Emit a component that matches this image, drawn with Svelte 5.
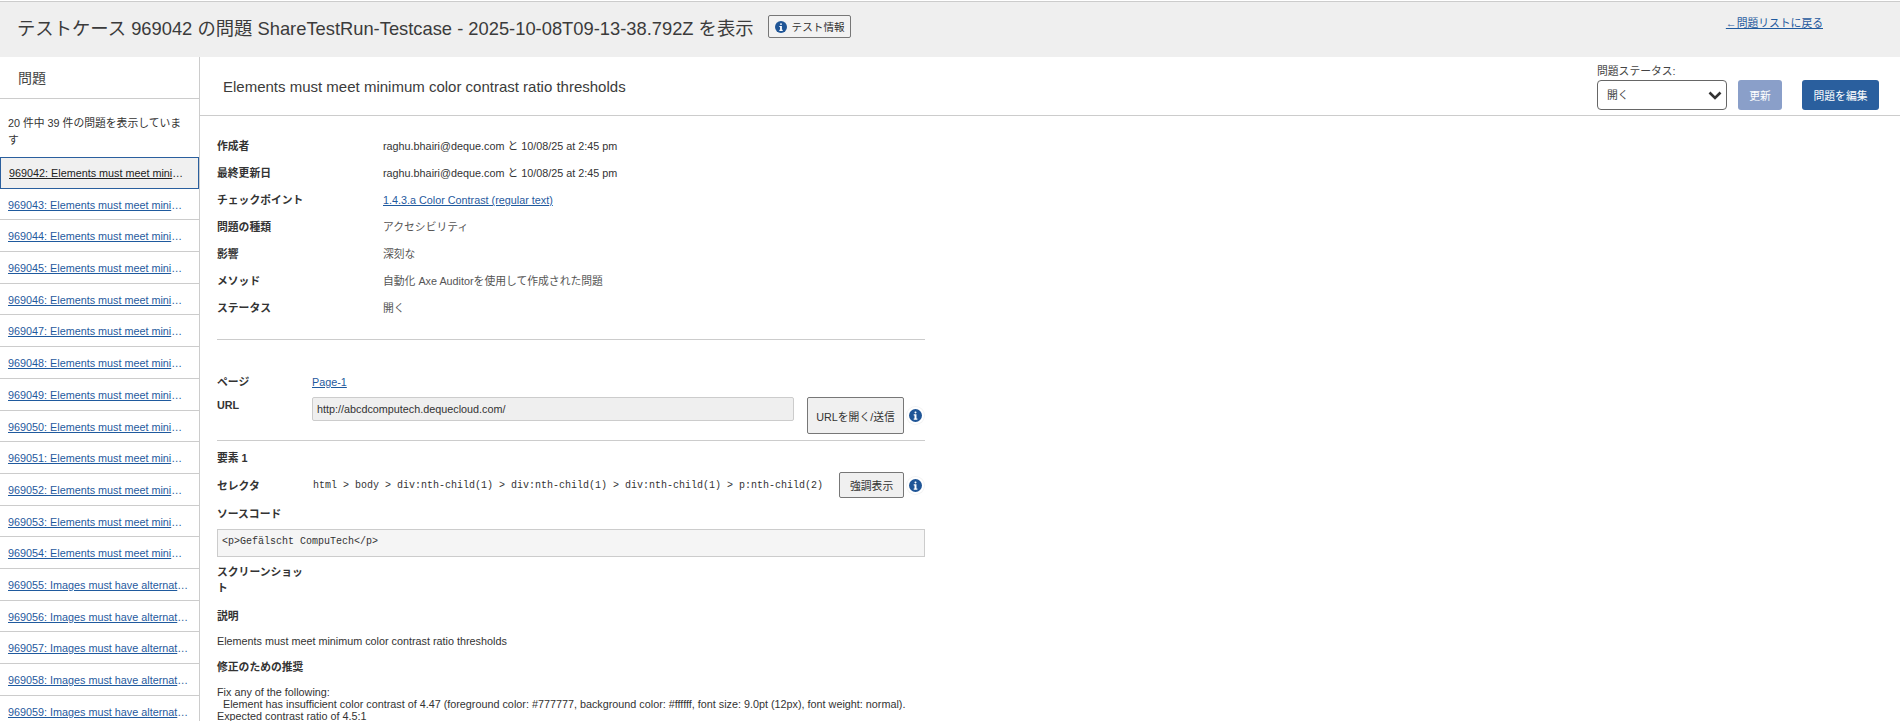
<script>
  const contrast = 'Elements must meet minimum color contrast ratio thresholds';
  const images = 'Images must have alternate text';
  const items = [];
  for (let i = 0; i < 18; i++) items.push({ id: 969042 + i, title: i < 13 ? contrast : images });
  const details = [
    ['作成者', 'raghu.bhairi@deque.com と 10/08/25 at 2:45 pm'],
    ['最終更新日', 'raghu.bhairi@deque.com と 10/08/25 at 2:45 pm'],
    ['チェックポイント', '1.4.3.a Color Contrast (regular text)', true],
    ['問題の種類', 'アクセシビリティ'],
    ['影響', '深刻な'],
    ['メソッド', '自動化 Axe Auditorを使用して作成された問題'],
    ['ステータス', '開く']
  ];
</script>

{#snippet info(size)}
  <svg class="info" width={size} height={size} viewBox="0 0 16 16" aria-hidden="true">
    <circle cx="8" cy="8" r="8" fill="#1f5596" />
    <rect x="6.8" y="3" width="2.4" height="2.4" rx="1" fill="#fff" />
    <path d="M5.8 6.6h3.4v5.2h1.1v1.4H5.8v-1.4h1v-3.8h-1z" fill="#fff" />
  </svg>
{/snippet}

<div class="page">
  <header class="top">
    <div class="title-wrap">
      <h1>テストケース 969042 の問題 ShareTestRun-Testcase - 2025-10-08T09-13-38.792Z を表示</h1>
      <button class="test-info">{@render info(12)}<span>テスト情報</span></button>
    </div>
    <a class="back" href="#back">←問題リストに戻る</a>
  </header>

  <div class="body">
    <aside class="side">
      <h2>問題</h2>
      <p class="count">20 件中 39 件の問題を表示しています</p>
      <ul>
        {#each items as item, i}
          <li class:current={i === 0}>
            <a href="#item">{item.id}: {item.title}</a>
          </li>
        {/each}
      </ul>
    </aside>

    <main>
      <div class="main-head">
        <h2>{contrast}</h2>
        <div class="actions">
          <label class="status">
            <span>問題ステータス:</span>
            <span class="select">
              開く
              <svg width="14" height="9" viewBox="0 0 14 9" aria-hidden="true"><path d="M1.5 1.5 7 7l5.5-5.5" fill="none" stroke="#333" stroke-width="2.6" /></svg>
            </span>
          </label>
          <button class="update">更新</button>
          <button class="edit">問題を編集</button>
        </div>
      </div>

      <div class="content">
        <div class="details">
          {#each details as [label, value, link]}
            <div class="label">{label}</div>
            <div class="value" class:soft={!link && !value.startsWith('raghu')}>
              {#if link}<a href="#cp">{value}</a>{:else}{value}{/if}
            </div>
          {/each}
        </div>

        <div class="page-block">
          <div class="page-row">
            <span class="label">ページ</span>
            <a href="#page">Page-1</a>
          </div>
          <div class="url-row">
            <span class="label">URL</span>
            <div class="url-input">http://abcdcomputech.dequecloud.com/</div>
            <button class="plain open">URLを開く/送信</button>
            <span class="halo">{@render info(13)}</span>
          </div>
        </div>

        <div class="element">
          <div class="label el-title">要素 1</div>
          <div class="selector-row">
            <span class="label">セレクタ</span>
            <code>html &gt; body &gt; div:nth-child(1) &gt; div:nth-child(1) &gt; div:nth-child(1) &gt; p:nth-child(2)</code>
            <button class="plain highlight">強調表示</button>
            <span class="halo">{@render info(13)}</span>
          </div>
          <div class="label source">ソースコード</div>
          <pre class="code">&lt;p&gt;Gefälscht CompuTech&lt;/p&gt;</pre>
          <div class="label shot">スクリーンショット</div>
          <div class="label desc">説明</div>
          <p class="text">{contrast}</p>
          <div class="label fix">修正のための推奨</div>
          <p class="fix-text">Fix any of the following:<br />&nbsp;&nbsp;Element has insufficient color contrast of 4.47 (foreground color: #777777, background color: #ffffff, font size: 9.0pt (12px), font weight: normal). Expected contrast ratio of 4.5:1</p>
        </div>
      </div>
    </main>
  </div>
</div>

<style>
  :global(body) {
    margin: 0;
    background: #fff;
    overflow: hidden;
  }
  .page {
    height: 721px;
    overflow: hidden;
    font-family: "Liberation Sans", "Noto Sans CJK JP", sans-serif;
    font-size: 10.8px;
    color: #333;
    padding-top: 1px;
    box-sizing: border-box;
  }
  a { color: #1f5a9e; }
  button { font-family: inherit; cursor: pointer; }
  .top {
    height: 55px;
    background: #efefef;
    border-top: 1px solid #ccc;
    display: flex;
    justify-content: space-between;
  }
  .title-wrap {
    display: flex;
    align-items: flex-start;
    padding: 12px 0 0 17px;
    gap: 14px;
  }
  h1 {
    margin: 0;
    font-size: 18.33px;
    font-weight: 400;
    line-height: 29px;
    color: #3b3b3b;
    white-space: nowrap;
  }
  .test-info {
    display: flex;
    align-items: center;
    gap: 5px;
    width: 83px;
    height: 23px;
    margin-top: 1px;
    padding: 0 0 0 6px;
    font-size: 10.6px;
    color: #333;
    background: #f2f2f2;
    border: 1px solid #777;
    border-radius: 2px;
    white-space: nowrap;
  }
  .info { display: block; flex: none; }
  .back {
    font-size: 10.8px;
    margin: 14px 77px 0 0;
    line-height: 14px;
  }
  .body {
    display: flex;
    height: 664px;
  }
  .side {
    width: 200px;
    flex: none;
    box-sizing: border-box;
    border-right: 1px solid #ccc;
  }
  .side h2 {
    margin: 0;
    height: 42px;
    box-sizing: border-box;
    padding: 12px 0 0 18px;
    font-size: 14px;
    line-height: 18px;
    font-weight: 400;
    color: #444;
    border-bottom: 1px solid #ccc;
  }
  .count {
    margin: 0;
    height: 58px;
    box-sizing: border-box;
    padding: 16px 12px 0 8px;
    line-height: 17px;
  }
  ul { list-style: none; margin: 0; padding: 0; }
  li {
    height: 31.7px;
    box-sizing: border-box;
    border-bottom: 1px solid #ccc;
    padding: 8px 10px 0 8px;
    line-height: 16px;
  }
  li a {
    display: block;
    overflow: hidden;
    white-space: nowrap;
    text-overflow: ellipsis;
  }
  li.current {
    background: #f0f0f0;
    border: 1px solid #2a5f9e;
    padding: 7px 9px 0 8px;
  }
  li.current a { color: #222; }
  main { flex: 1; min-width: 0; }
  .main-head {
    height: 59px;
    box-sizing: border-box;
    border-bottom: 1px solid #ccc;
    display: flex;
    justify-content: space-between;
    padding-right: 21px;
  }
  .main-head h2 {
    margin: 0;
    padding: 20px 0 0 23px;
    font-size: 15px;
    line-height: 20px;
    font-weight: 400;
    color: #3b3b3b;
  }
  .actions { display: flex; align-items: flex-start; }
  .status {
    display: flex;
    flex-direction: column;
    width: 130px;
    line-height: 14px;
    padding-top: 7px;
    color: #444;
  }
  .select {
    box-sizing: border-box;
    height: 30px;
    margin-top: 2px;
    border: 1px solid #666;
    border-radius: 4px;
    background: #fff;
    display: flex;
    align-items: center;
    justify-content: space-between;
    padding: 0 4px 0 9px;
  }
  .update, .edit {
    height: 30px;
    margin-top: 23px;
    border: none;
    border-radius: 3px;
    font-size: 10.8px;
    color: #fff;
    padding: 0;
  }
  .update { width: 44px; margin-left: 11px; background: #8a9fc9; }
  .edit { width: 77px; margin-left: 20px; background: #2a5f9e; }
  .content {
    width: 708px;
    margin-left: 17px;
    padding-top: 17px;
  }
  .details {
    display: grid;
    grid-template-columns: 166px 1fr;
    grid-auto-rows: 27px;
    line-height: 27px;
    height: 206px;
    border-bottom: 1px solid #ccc;
  }
  .label { font-weight: 700; color: #333; }
  .value.soft { color: #555; }
  .page-block {
    height: 101px;
    box-sizing: border-box;
    border-bottom: 1px solid #ccc;
    padding-top: 34px;
  }
  .page-row {
    display: flex;
    height: 23px;
    line-height: 16px;
  }
  .page-row .label, .url-row .label, .selector-row .label { width: 95px; flex: none; }
  .url-row { display: flex; align-items: flex-start; }
  .url-row .label { line-height: 17px; }
  .url-input {
    box-sizing: border-box;
    width: 482px;
    height: 24px;
    line-height: 22px;
    padding-left: 4px;
    background: #efefef;
    border: 1px solid #ccc;
    border-radius: 2px;
    color: #333;
  }
  .plain {
    background: #f0f0f0;
    border: 1px solid #777;
    border-radius: 2px;
    color: #333;
    font-size: 10.8px;
    padding: 0;
    white-space: nowrap;
  }
  .open { width: 97px; height: 37px; margin-left: 13px; }
  .halo {
    background: #fff;
    border-radius: 50%;
    padding: 2px;
    margin-left: 3px;
    box-shadow: 0 0 0 1px #f4f4f4;
  }
  .url-row .halo { margin-top: 10px; }
  .el-title { height: 32px; line-height: 16px; padding-top: 9px; margin-bottom: -11px; }
  .selector-row {
    display: flex;
    align-items: center;
    height: 26px;
    margin-top: 1px;
  }
  code {
    font-family: "Liberation Mono", monospace;
    font-size: 10px;
    margin-left: 1px;
    white-space: nowrap;
  }
  .highlight { width: 65px; height: 26px; margin-left: 16px; }
  .source { line-height: 16px; margin-top: 8px; }
  .code {
    box-sizing: border-box;
    margin: 7px 0 0;
    height: 28px;
    line-height: 24px;
    padding: 0 4px;
    background: #f5f5f5;
    border: 1px solid #ccc;
    font-family: "Liberation Mono", monospace;
    font-size: 10px;
  }
  .shot { width: 90px; line-height: 16px; margin-top: 7px; }
  .desc { line-height: 16px; margin-top: 12px; }
  .text { margin: 9px 0 0; line-height: 16px; }
  .fix { line-height: 16px; margin-top: 10px; }
  .fix-text { margin: 11px 0 0; line-height: 12px; }
</style>
